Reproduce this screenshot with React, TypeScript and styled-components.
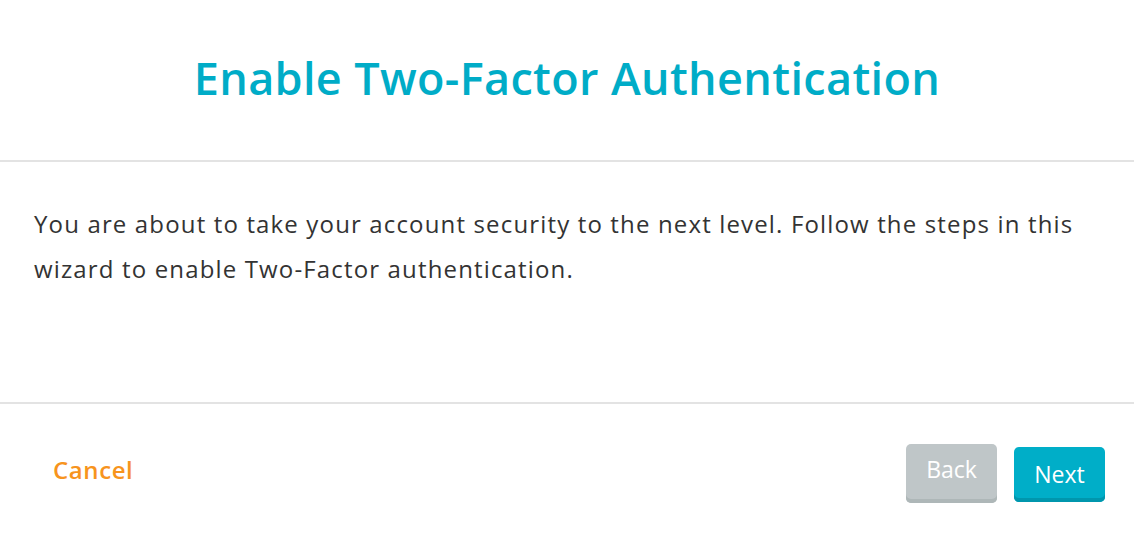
import { createGlobalStyle, styled } from "styled-components"

const GlobalStyle = createGlobalStyle`
  html, body {
    margin: 0;
    padding: 0;
    background: #fff;
  }
  body {
    font-family: "Open Sans", "Noto Sans", sans-serif;
  }
`

const Dialog = styled.div`
  width: 1134px;
  height: 534px;
  display: flex;
  flex-direction: column;
  background: #fff;
`

const Header = styled.header`
  height: 160px;
  display: flex;
  align-items: center;
  justify-content: center;
  border-bottom: 2px solid #e3e3e3;
`

const Title = styled.h1`
  margin: -6px 0 0;
  font-size: 45px;
  font-weight: 600;
  letter-spacing: 0.35px;
  color: #00acc7;
`

const Body = styled.main`
  height: 242px;
  padding: 39px 34px 0;
  box-sizing: border-box;
  border-bottom: 2px solid #e3e3e3;
`

const Text = styled.p`
  margin: 0;
  font-size: 24px;
  line-height: 45px;
  letter-spacing: 1.15px;
  color: #333;
`

const Footer = styled.footer`
  flex: 1;
  display: flex;
  align-items: center;
  padding: 0 29px 0 53px;
`

const CancelLink = styled.a`
  font-size: 24px;
  font-weight: 600;
  letter-spacing: 0.6px;
  color: #f7941d;
  cursor: pointer;
  margin-right: auto;
`

const Actions = styled.div`
  display: flex;
  gap: 17px;
  align-items: flex-start;
  margin-top: 9px;
`

const Button = styled.button<{ $tone: "grey" | "blue"; $tall?: boolean }>`
  width: 91px;
  height: ${(p) => (p.$tall ? "59px" : "55px")};
  margin-top: ${(p) => (p.$tall ? "0" : "3px")};
  border: none;
  border-radius: 5px;
  font-family: inherit;
  font-size: 23px;
  color: #fff;
  background: ${(p) => (p.$tone === "blue" ? "#00aec8" : "#bfc6c8")};
  box-shadow: inset 0 -4px 0 ${(p) => (p.$tone === "blue" ? "#0096ad" : "#aeb7b8")};
  padding: ${(p) => (p.$tall ? "0 0 10px" : "0 0 2px")};
`

export default function App() {
  return (
    <>
      <GlobalStyle />
      <Dialog>
        <Header>
          <Title>Enable Two-Factor Authentication</Title>
        </Header>
        <Body>
          <Text>
            You are about to take your account security to the next level. Follow the steps in this
            <br />
            wizard to enable Two-Factor authentication.
          </Text>
        </Body>
        <Footer>
          <CancelLink>Cancel</CancelLink>
          <Actions>
            <Button $tone="grey" $tall>Back</Button>
            <Button $tone="blue">Next</Button>
          </Actions>
        </Footer>
      </Dialog>
    </>
  )
}
